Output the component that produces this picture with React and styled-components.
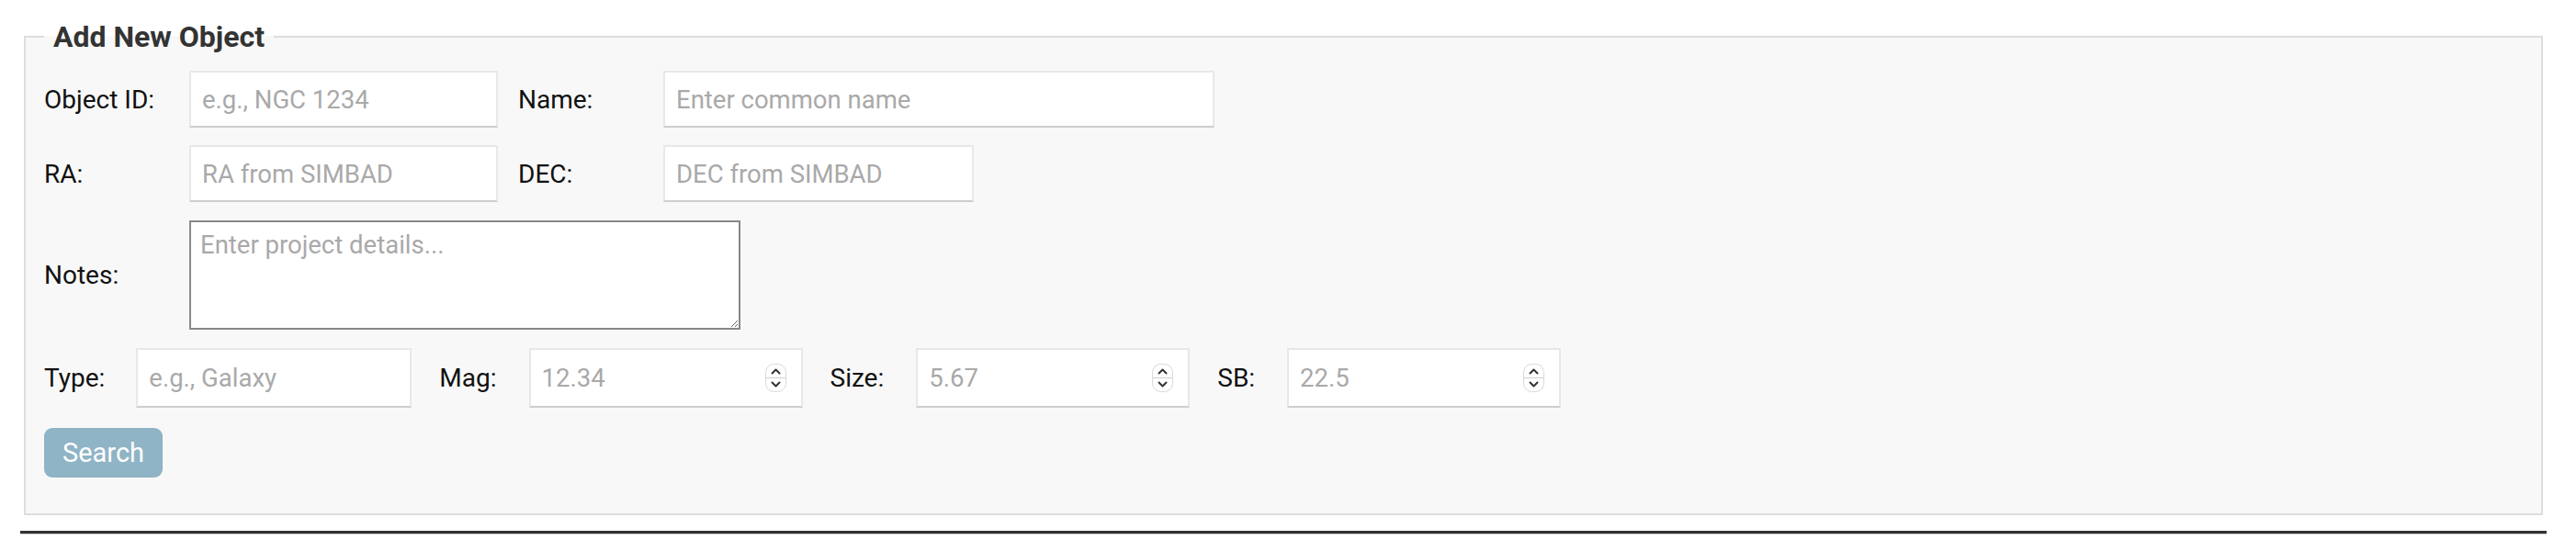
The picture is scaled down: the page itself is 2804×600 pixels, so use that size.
import React from "react";
import styled, { createGlobalStyle } from "styled-components";

const GlobalStyle = createGlobalStyle`
  html, body { margin: 0; padding: 0; background: #ffffff; }
  body { font-family: Roboto, "Liberation Sans", Arial, sans-serif; }
  * { box-sizing: border-box; }
`;

const Page = styled.div`
  padding: 22px 32px 0 22px;
  width: 2804px;
`;

const Fieldset = styled.fieldset`
  margin: 0 4px;
  padding: 19px 20px 39px 20px;
  border: 2px solid #dddddd;
  background: #f8f8f8;
  min-width: 0;
`;

const Legend = styled.legend`
  font-family: Roboto, "Liberation Sans", sans-serif;
  font-weight: 700;
  font-size: 32px;
  line-height: 36px;
  color: #333333;
  padding: 0 10px;
`;

const Form = styled.div`
  display: flex;
  flex-direction: column;
  align-items: flex-start;
  gap: 19px;
`;

const Row = styled.div`
  display: flex;
  align-items: center;
  gap: 22px;
  margin-top: ${(p) => p.$shift || 0}px;
`;

const InlineRow = styled.div`
  display: flex;
  align-items: center;
  gap: 30px;
  margin-top: 1px;
`;

const Field = styled.div`
  display: flex;
  align-items: center;
  gap: ${(p) => p.$gap || 35}px;
`;

const Label = styled.label`
  font-family: Roboto, "Liberation Sans", sans-serif;
  font-size: 28px;
  color: #111111;
  flex: none;
  width: ${(p) => (p.$width ? `${p.$width}px` : "auto")};
`;

const TextInput = styled.input`
  width: ${(p) => p.$width}px;
  height: ${(p) => p.$height || 62}px;
  border: 2px solid #e8e8e8;
  border-bottom-color: #cdcdcd;
  background: #ffffff;
  padding: 0 12px;
  font-family: Roboto, "Liberation Sans", sans-serif;
  font-size: 27.5px;
  color: #333;
  outline: none;
  &::placeholder { color: #a9a9a9; }
`;

const NumberBox = styled.div`
  width: ${(p) => p.$width}px;
  height: 65px;
  display: flex;
  align-items: center;
  border: 2px solid #e8e8e8;
  border-bottom-color: #cdcdcd;
  background: #ffffff;
  padding: 0 16px 0 12px;
`;

const NumberInput = styled.input`
  flex: 1;
  min-width: 0;
  height: 100%;
  border: none;
  background: transparent;
  padding: 0;
  font-family: Roboto, "Liberation Sans", sans-serif;
  font-size: 27.5px;
  color: #333;
  outline: none;
  -moz-appearance: textfield;
  &::placeholder { color: #a9a9a9; }
  &::-webkit-inner-spin-button,
  &::-webkit-outer-spin-button { -webkit-appearance: none; margin: 0; }
`;

const TextArea = styled.textarea`
  width: 600px;
  height: 119px;
  border: 2px solid #888888;
  background: #ffffff;
  padding: 8px 10px;
  font-family: Roboto, "Liberation Sans", sans-serif;
  font-size: 27.5px;
  color: #333;
  outline: none;
  margin: 0;
  &::placeholder { color: #a9a9a9; }
`;

const Button = styled.button`
  height: 54px;
  margin-top: 3px;
  padding: 0 20px;
  border: none;
  border-radius: 9px;
  background: #8fb4c5;
  color: #ffffff;
  font-family: Roboto, "Liberation Sans", sans-serif;
  font-size: 29px;
  cursor: pointer;
`;

const Divider = styled.hr`
  margin: 17px 0 0 0;
  height: 0;
  border: none;
  border-top: 3px solid #333333;
  border-bottom: 1px solid #cccccc;
`;

const Spinner = () => (
  <svg width="23" height="31" viewBox="0 0 23 31" style={{ flex: "none" }}>
    <rect x="0.5" y="0.5" width="22" height="30" rx="9" fill="#ffffff" stroke="#d9d9d9" />
    <line x1="1" y1="15.5" x2="22" y2="15.5" stroke="#d0d0d0" strokeWidth="1" />
    <path d="M7.5 10.5 L11.5 6.5 L15.5 10.5" fill="none" stroke="#333" strokeWidth="2" strokeLinecap="round" strokeLinejoin="round" />
    <path d="M7.5 20.5 L11.5 24.5 L15.5 20.5" fill="none" stroke="#333" strokeWidth="2" strokeLinecap="round" strokeLinejoin="round" />
  </svg>
);

const NumberField = ({ placeholder }) => (
  <NumberBox $width={298}>
    <NumberInput type="number" placeholder={placeholder} />
    <Spinner />
  </NumberBox>
);

export default function App() {
  return (
    <>
      <GlobalStyle />
      <Page>
        <Fieldset>
          <Legend>Add New Object</Legend>
          <Form>
            <Row>
              <Label $width={136}>Object ID:</Label>
              <TextInput $width={336} placeholder="e.g., NGC 1234" />
              <Label $width={136}>Name:</Label>
              <TextInput $width={600} placeholder="Enter common name" />
            </Row>
            <Row>
              <Label $width={136}>RA:</Label>
              <TextInput $width={336} placeholder="RA from SIMBAD" />
              <Label $width={136}>DEC:</Label>
              <TextInput $width={338} placeholder="DEC from SIMBAD" />
            </Row>
            <Row $shift={1}>
              <Label $width={136}>Notes:</Label>
              <TextArea placeholder="Enter project details..." />
            </Row>
            <InlineRow>
              <Field $gap={34}>
                <Label>Type:</Label>
                <TextInput $width={300} $height={65} placeholder="e.g., Galaxy" />
              </Field>
              <Field>
                <Label>Mag:</Label>
                <NumberField placeholder="12.34" />
              </Field>
              <Field>
                <Label>Size:</Label>
                <NumberField placeholder="5.67" />
              </Field>
              <Field>
                <Label>SB:</Label>
                <NumberField placeholder="22.5" />
              </Field>
            </InlineRow>
            <Button type="button">Search</Button>
          </Form>
        </Fieldset>
        <Divider />
      </Page>
    </>
  );
}
